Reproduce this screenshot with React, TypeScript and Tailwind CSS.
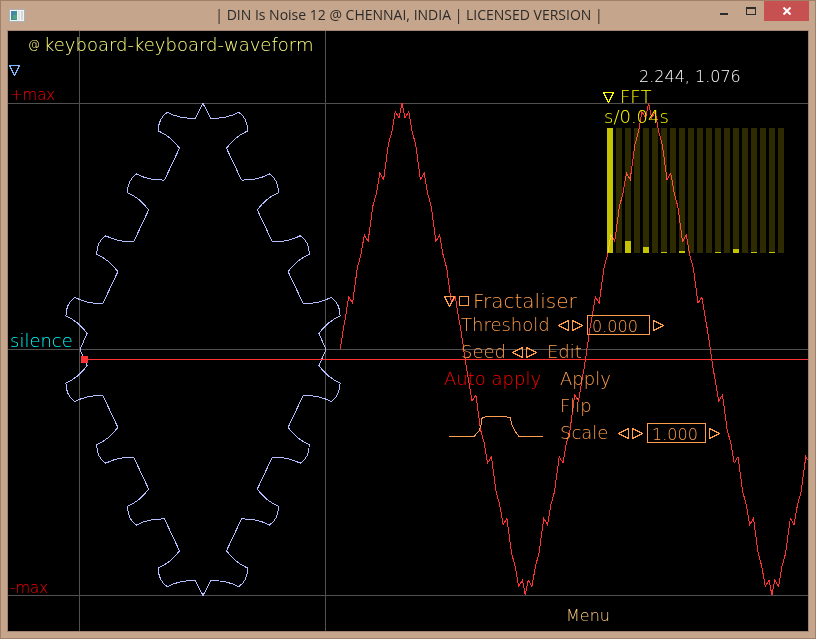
import { useState } from "react";

type Point = [number, number];

const CENTER_Y = 318;
const AMPLITUDE = 246;

// one quarter of the wave, measured from the zero crossing up to the peak
const quarterWave: Point[] = [[0, 0], [3, 20], [5, 31], [8.4, 52]];
for (let i = 0; i < 4; i++) {
  const x = 12.3 + i * 15.5;
  const y = 46 + i * 61.7;
  quarterWave.push([x, y]);
  if (i < 3) {
    quarterWave.push([x + 4.7, y + 35], [x + 8.3, y + 48], [x + 11.7, y + 68]);
  }
}
quarterWave.push([61.7, AMPLITUDE]);

const buildWave = (startX: number, halfCycles: number) => {
  const points: string[] = [];
  for (let n = 0; n < halfCycles; n++) {
    const x0 = startX + n * 123.3;
    const sign = n % 2 === 0 ? -1 : 1;
    quarterWave.forEach(([x, y]) =>
      points.push(`${x0 + x},${CENTER_Y + sign * y}`)
    );
    [...quarterWave]
      .reverse()
      .forEach(([x, y]) =>
        points.push(`${x0 + 2 * 61.7 - x},${CENTER_Y + sign * y}`)
      );
  }
  return points.join(" ");
};

// upper left quarter of the keyboard shape, drawn from its top point
const buildTeeth = () => {
  let d = `M0,-${AMPLITUDE}`;
  for (let i = 0; i < 4; i++) {
    d += ` L${-7.7 - i * 30.8},${-231.2 + i * 61.7}`;
    d += " q-16,0.5 -28,-6 q-8.9,5.7 -9,18.6 q12.4,5.4 21.2,17.3";
  }
  return `${d} L-123,0`;
};

const wave = buildWave(332.3, 4);
const teeth = buildTeeth();

const spectrum = [
  125, 0, 12, 0, 6, 0, 1, 0, 2, 0, 0, 0, 1, 0, 4, 0, 1, 0, 1, 0,
];

const Scope = () => (
  <svg
    className="absolute inset-0 h-full w-full"
    fill="none"
    shapeRendering="crispEdges"
  >
    <g stroke="#505050">
      <line x1="0" y1="72.5" x2="100%" y2="72.5" />
      <line x1="0" y1="318.5" x2="100%" y2="318.5" />
      <line x1="0" y1="564.5" x2="100%" y2="564.5" />
      <line x1="71.5" y1="0" x2="71.5" y2="100%" />
      <line x1="317.5" y1="0" x2="317.5" y2="100%" />
    </g>
    <g stroke="#b3bfff">
      <path d={teeth} transform="translate(195 318.5)" />
      <path d={teeth} transform="translate(195 318.5) scale(-1 1)" />
      <path d={teeth} transform="translate(195 318.5) scale(1 -1)" />
      <path d={teeth} transform="translate(195 318.5) scale(-1 -1)" />
    </g>
    <line x1="76" y1="328.5" x2="100%" y2="328.5" stroke="#ff3333" />
    <rect x="73" y="325" width="7" height="7" fill="#ff3333" />
    <polyline points={wave} stroke="#ff3333" />
  </svg>
);

const Triangle = ({ direction }: { direction: "down" | "left" | "right" }) => {
  const points = {
    down: "0.5,0.5 10.5,0.5 5.5,10.5",
    left: "10.5,0.5 10.5,10.5 0.5,5.5",
    right: "0.5,0.5 0.5,10.5 10.5,5.5",
  };
  return (
    <svg
      width="11"
      height="11"
      viewBox="0 0 11 11"
      fill="none"
      stroke="currentColor"
      shapeRendering="crispEdges"
      className="block"
    >
      <polygon points={points[direction]} />
    </svg>
  );
};

const Stepper = ({ name }: { name: string }) => (
  <div className="flex gap-[3px]">
    <button type="button" aria-label={`${name} down`}>
      <Triangle direction="left" />
    </button>
    <button type="button" aria-label={`${name} up`}>
      <Triangle direction="right" />
    </button>
  </div>
);

const NumberField = ({ id, label, initial, labelWidth, inputWidth }: {
  id: string;
  label: string;
  initial: string;
  labelWidth: string;
  inputWidth: string;
}) => {
  const [value, setValue] = useState(initial);
  return (
    <div className="flex h-6 items-center">
      <label htmlFor={id} className={labelWidth}>
        {label}
      </label>
      <Stepper name={label} />
      <input
        id={id}
        type="text"
        value={value}
        onChange={(e) => setValue(e.target.value)}
        className={`${inputWidth} mr-[3px] ml-1 h-5 border border-[#ff9f4d] bg-transparent pt-[2px] pl-1 text-base leading-none outline-none`}
      />
      <button type="button" aria-label={`${label} more`}>
        <Triangle direction="right" />
      </button>
    </div>
  );
};

const FractaliserPanel = () => {
  const [enabled, setEnabled] = useState(false);
  return (
    <section className="absolute top-[258px] left-[436px] flex flex-col gap-[3px] text-[#ff9f4d]">
      <div>
        <div className="flex h-6 items-center">
          <button type="button" aria-label="Collapse fractaliser" className="mr-1">
            <Triangle direction="down" />
          </button>
          <input
            id="fractaliser"
            type="checkbox"
            checked={enabled}
            onChange={() => setEnabled(!enabled)}
            className="mr-1 h-[10px] w-[10px] appearance-none border border-[#ff9f4d] checked:bg-[#ff9f4d]"
          />
          <label htmlFor="fractaliser" className="text-xl leading-6">
            Fractaliser
          </label>
        </div>
        <div className="pl-[17px]">
          <NumberField
            id="threshold"
            label="Threshold"
            initial="0.000"
            labelWidth="w-[97px]"
            inputWidth="w-[63px]"
          />
        </div>
      </div>
      <div className="flex h-6 items-center pl-[17px]">
        <span className="w-[51px]">Seed</span>
        <Stepper name="Seed" />
        <button type="button" className="ml-[10px]">
          Edit
        </button>
      </div>
      <div className="flex">
        <div className="flex w-[116px] flex-col items-start">
          <button type="button" className="h-6 text-[#ff0000]">
            Auto apply
          </button>
          <svg
            width="100"
            height="24"
            viewBox="0 0 100 24"
            fill="none"
            stroke="currentColor"
            shapeRendering="crispEdges"
            className="mt-6"
          >
            <polyline points="5,21.5 30,21.5 35,16 37.5,9 37.5,3.5 42,1.5 61,1.5 66.5,3 67.5,9 71,16 75,21.5 99,21.5" />
          </svg>
        </div>
        <div className="flex flex-col items-start gap-[3px]">
          <button type="button" className="h-6">
            Apply
          </button>
          <button type="button" className="h-6">
            Flip
          </button>
          <NumberField
            id="scale"
            label="Scale"
            initial="1.000"
            labelWidth="w-[58px]"
            inputWidth="w-[59px]"
          />
        </div>
      </div>
    </section>
  );
};

const FftPanel = () => (
  <section className="absolute top-[54px] left-[595px] text-[#ffff00]">
    <div className="flex h-6 items-center gap-[6px]">
      <button type="button" aria-label="Collapse FFT">
        <Triangle direction="down" />
      </button>
      <h2>FFT</h2>
    </div>
    <p className="h-[19px] pl-px leading-4">s/0.04s</p>
    <div className="ml-1 flex h-[125px] gap-[3px] mix-blend-screen">
      {spectrum.map((level, i) => (
        <div key={i} className="flex w-[6px] items-end bg-[#2e2b00]">
          <div className="w-full bg-[#c4c400]" style={{ height: level }} />
        </div>
      ))}
    </div>
  </section>
);

const TitleBar = () => (
  <header className="flex h-[29px] items-start pr-[6px] pl-2">
    <div className="flex-1 pt-2">
      <svg width="16" height="14" viewBox="0 0 16 14">
        <rect x="0.5" y="0.5" width="15" height="12" fill="#f4f4f4" stroke="#a9b4ba" />
        <rect x="2" y="2" width="6" height="9" fill="#3f8f93" />
        <rect x="2" y="2" width="3" height="5" fill="#4a7fae" />
        <rect x="4" y="6" width="4" height="4" fill="#4fa583" />
        <rect x="9" y="2" width="2" height="9" fill="#dfe4e2" />
        <rect x="12" y="2" width="2" height="9" fill="#d3d8d6" />
      </svg>
    </div>
    <h1 className="pt-[2px] font-['Open_Sans',sans-serif] text-sm leading-6 text-[#2b2b2b]">
      | DIN Is Noise 12 @ CHENNAI, INDIA | LICENSED VERSION |
    </h1>
    <div className="flex flex-1 justify-end">
      <button type="button" aria-label="Minimize" className="flex h-5 w-[26px] justify-center">
        <svg width="8" height="20">
          <rect y="12" width="8" height="2" fill="#2b2b2b" />
        </svg>
      </button>
      <button type="button" aria-label="Maximize" className="flex h-5 w-[27px] justify-center">
        <svg width="10" height="20" fill="none" stroke="#2b2b2b" shapeRendering="crispEdges">
          <rect x="0.5" y="6.5" width="9" height="7" />
          <path d="M0,7.5H10" />
        </svg>
      </button>
      <button
        type="button"
        aria-label="Close"
        className="flex h-5 w-[45px] items-center justify-center bg-[#c75050]"
      >
        <svg width="8" height="8" viewBox="0 0 8 8" stroke="white" strokeWidth="2">
          <path d="M0.5,0.5L7.5,7.5M7.5,0.5L0.5,7.5" />
        </svg>
      </button>
    </div>
  </header>
);

export default function App() {
  return (
    <div className="flex min-h-screen flex-col border border-[#a08069] bg-[#c5a58b]">
      <TitleBar />
      <main className="relative mx-[6px] mb-[6px] flex flex-1 flex-col overflow-hidden border border-[#a5846d] bg-black font-['DejaVu_Sans',sans-serif] text-lg leading-6 font-extralight">
        <Scope />
        <div className="relative flex items-center gap-1 pt-[2px] pl-5 text-[#ffff80]">
          <span className="text-xs leading-6">@</span>
          <h2>keyboard-keyboard-waveform</h2>
        </div>
        <button
          type="button"
          aria-label="Show controls"
          className="absolute top-[34px] left-[1px] text-[#80b8ff]"
        >
          <Triangle direction="down" />
        </button>
        <span className="absolute top-[52px] left-[2px] text-[15px] text-[#ff0000]">
          +max
        </span>
        <span className="absolute top-[298px] left-[2px] text-[#00ffff]">
          silence
        </span>
        <span className="absolute top-[545px] left-[2px] text-[15px] text-[#ff0000]">
          -max
        </span>
        <span className="absolute top-[34px] left-[631px] text-base leading-6 text-white">
          2.244, 1.076
        </span>
        <FftPanel />
        <FractaliserPanel />
        <footer className="relative mt-auto flex justify-center pb-[3px] pl-[360px]">
          <button type="button" className="text-base leading-6 text-[#ffcc80]">
            Menu
          </button>
        </footer>
      </main>
    </div>
  );
}
